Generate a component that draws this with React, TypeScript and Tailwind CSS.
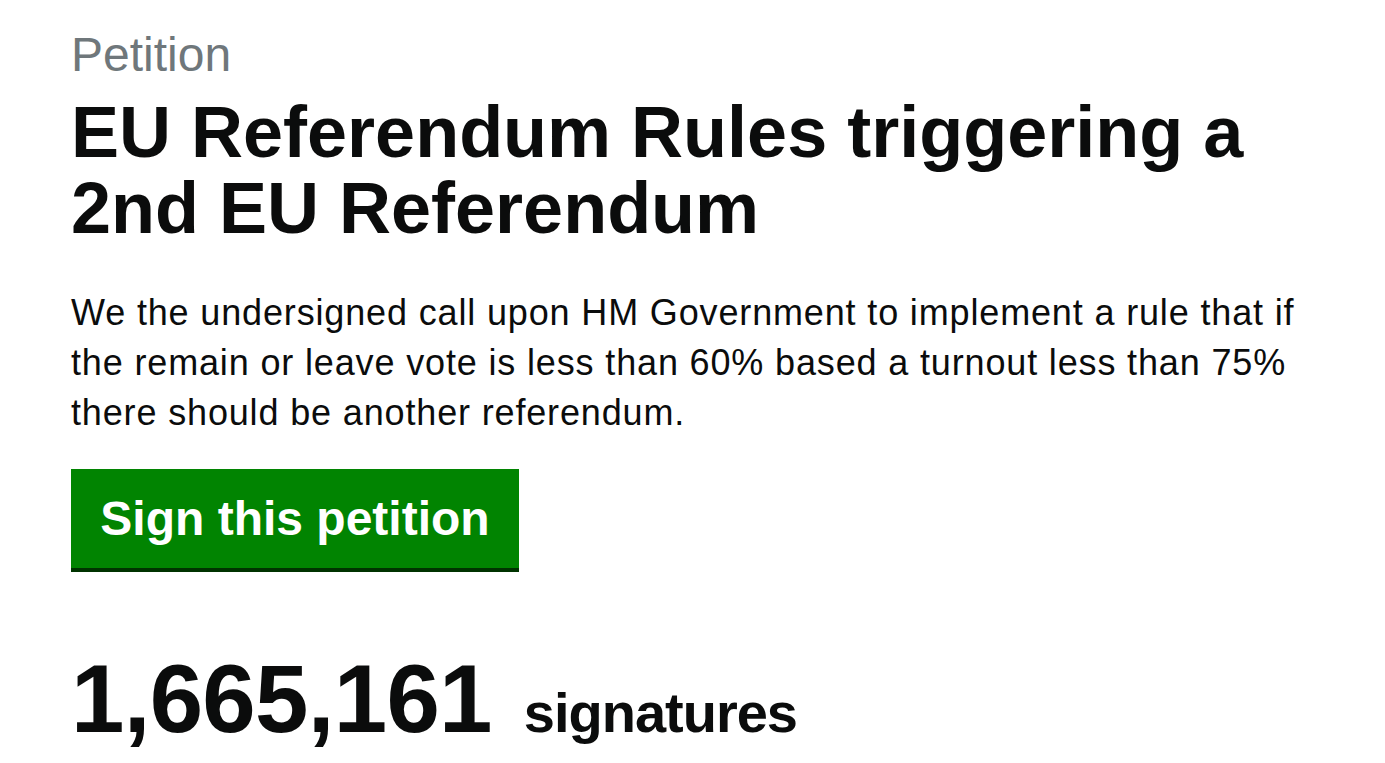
export default function App() {
  return (
    <div
      className="min-h-screen bg-white pl-[71px] pr-8 pt-[28px] text-[#0b0c0c]"
      style={{ fontFamily: '"Liberation Sans", Arial, sans-serif' }}
    >
      <div className="text-[48px] leading-[53px] text-[#6f777b]">Petition</div>
      <h1 className="mt-[13px] text-[72px] font-bold leading-[76px]">
        EU Referendum Rules triggering a
        <br />
        2nd EU Referendum
      </h1>
      <p className="mt-[42px] text-[36px] leading-[50px] tracking-[0.85px]">
        We the undersigned call upon HM Government to implement a rule that if
        <br />
        the remain or leave vote is less than 60% based a turnout less than 75%
        <br />
        there should be another referendum.
      </p>
      <div className="mt-[31px]">
        <button className="flex h-[103px] w-[448px] items-center justify-center border-b-4 border-[#003300] bg-[#018401] text-[48px] font-bold leading-[48px] text-white">
          Sign this petition
        </button>
      </div>
      <div className="mt-[79px] flex items-baseline gap-[32px]">
        <span className="text-[96px] font-bold leading-[96px] tracking-[-0.7px]">1,665,161</span>
        <span className="text-[56px] font-bold leading-[56px] tracking-[-1px]">signatures</span>
      </div>
    </div>
  );
}
